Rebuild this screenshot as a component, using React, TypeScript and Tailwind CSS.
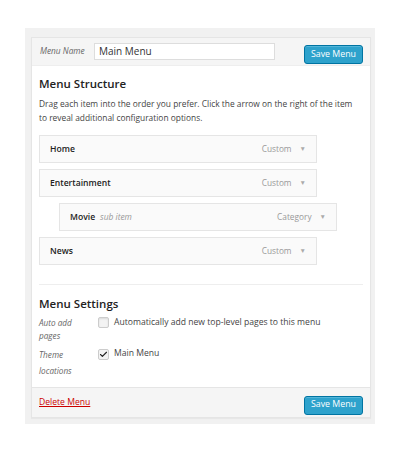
import { Check } from 'lucide-react'

const items = [
  { title: 'Home', type: 'Custom', sub: false },
  { title: 'Entertainment', type: 'Custom', sub: false },
  { title: 'Movie', type: 'Category', sub: true },
  { title: 'News', type: 'Custom', sub: false },
]

function SaveButton() {
  return (
    <button className="h-[19px] w-[59px] rounded-[3px] border border-[#0074a2] bg-[#2ea2cc] text-[8.8px] text-white shadow-[inset_0_1px_0_rgba(120,200,230,0.5)]">
      Save Menu
    </button>
  )
}

function MenuItem({ title, type, sub }: { title: string; type: string; sub: boolean }) {
  return (
    <div
      className={`flex h-[28px] w-[278px] items-center border border-[#e5e5e5] bg-[#fafafa] pl-[10px] pr-[10px] ${sub ? 'ml-[20px]' : ''}`}
    >
      <span className="text-[8.6px] font-semibold text-[#222]">{title}</span>
      {sub && <span className="ml-[5px] text-[8.4px] italic text-[#999]">sub item</span>}
      <span className="ml-auto text-[8.3px] text-[#999]">{type}</span>
      <span className="ml-[8px] text-[6.5px] text-[#aaa]">▼</span>
    </div>
  )
}

export default function App() {
  return (
    <div className="min-h-[453px] bg-white pl-[25px] pt-[28px] font-['Open_Sans',sans-serif]">
      <div className="w-[350px] bg-[#f1f1f1] pb-[6px] pl-[6px] pr-[4px] pt-[9px]">
        <div className="border border-[#e5e5e5] bg-white shadow-[0_1px_1px_rgba(0,0,0,0.04)]">
          <div className="flex h-[28px] items-center border-b border-[#eee] bg-[#f5f5f5] pl-[8px] pr-[7px]">
            <span className="w-[54px] text-[8.3px] italic text-[#666]">Menu Name</span>
            <div className="flex h-[17px] w-[181px] items-center border border-[#ddd] bg-white px-[4px] text-[10px] text-[#333]">
              Main Menu
            </div>
            <div className="ml-auto">
              <SaveButton />
            </div>
          </div>

          <div className="px-[7px] pt-[9px]">
            <h3 className="text-[11.5px] font-semibold text-[#222]">Menu Structure</h3>
            <p className="mt-[5px] whitespace-nowrap text-[8.4px] leading-[14px] text-[#444]">
              Drag each item into the order you prefer. Click the arrow on the right of the item
              <br />
              to reveal additional configuration options.
            </p>
            <div className="mt-[10px] flex flex-col gap-[6px]">
              {items.map((it) => (
                <MenuItem key={it.title} {...it} />
              ))}
            </div>
            <div className="mt-[19px] border-t border-[#eee]" />
            <h3 className="mt-[10px] text-[11.5px] font-semibold text-[#222]">Menu Settings</h3>
            <div className="mt-[3px] flex">
              <div className="w-[59px] text-[8.2px] italic leading-[13px] text-[#666]">
                Auto add
                <br />
                pages
              </div>
              <label className="flex items-start text-[8.6px] text-[#444]">
                <span className="mr-[5px] mt-[1px] h-[11px] w-[11px] rounded-[2px] border border-[#ccc] bg-[#f3f3f3] shadow-[inset_0_1px_2px_rgba(0,0,0,0.1)]" />
                Automatically add new top-level pages to this menu
              </label>
            </div>
            <div className="mt-[5px] flex pb-[8px]">
              <div className="w-[59px] text-[8.2px] italic leading-[16px] text-[#666]">
                Theme
                <br />
                locations
              </div>
              <label className="flex items-start text-[8.6px] text-[#444]">
                <span className="mr-[5px] mt-[2px] flex h-[11px] w-[11px] items-center justify-center rounded-[2px] border border-[#ccc] bg-[#f3f3f3]">
                  <Check size={9} strokeWidth={3} className="text-[#222]" />
                </span>
                Main Menu
              </label>
            </div>
          </div>

          <div className="flex h-[30px] items-center border-t border-[#e5e5e5] bg-[#f5f5f5] pl-[7px] pr-[7px]">
            <a className="text-[8.6px] text-[#c00] underline">Delete Menu</a>
            <div className="ml-auto">
              <SaveButton />
            </div>
          </div>
        </div>
      </div>
    </div>
  )
}
